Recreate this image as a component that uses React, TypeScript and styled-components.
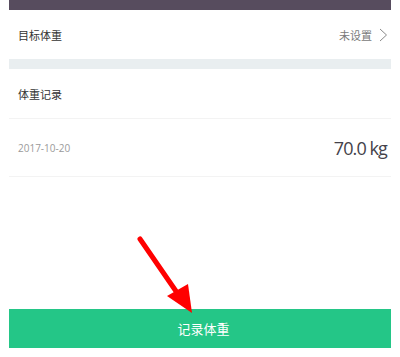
import React from "react";
import styled, { createGlobalStyle } from "styled-components";

const GlobalStyle = createGlobalStyle`
  html, body {
    margin: 0;
    padding: 0;
    background: #ffffff;
    font-family: "Noto Sans", "Noto Sans CJK SC", sans-serif;
  }
`;

const Page = styled.div`
  position: relative;
  width: 400px;
  height: 357px;
  padding: 0 9px;
  box-sizing: border-box;
  display: flex;
  flex-direction: column;
  overflow: hidden;
`;

const TopBar = styled.div`
  height: 10px;
  background: #574c5e;
`;

const Row = styled.div<{ $height: number; $border?: boolean }>`
  height: ${(p) => p.$height}px;
  display: flex;
  align-items: center;
  justify-content: space-between;
  padding: 0 3px 0 9px;
  border-bottom: ${(p) => (p.$border ? "1px solid #f3f3f3" : "none")};
`;

const Label = styled.span`
  font-size: 11px;
  color: #333333;
`;

const Value = styled.span`
  display: flex;
  align-items: center;
  gap: 7px;
  font-size: 11px;
  color: #7a7a7a;
`;

const Gap = styled.div`
  height: 10px;
  background: #e9eef0;
`;

const DateText = styled.span`
  font-family: "Open Sans", "Noto Sans", sans-serif;
  font-size: 10px;
  color: #9a9a9a;
`;

const Weight = styled.span`
  font-family: "Open Sans", "Noto Sans", sans-serif;
  font-size: 18px;
  color: #44424a;
  letter-spacing: -0.9px;
  padding-right: 1px;
`;

const Spacer = styled.div`
  flex: 1;
`;

const RecordButton = styled.button`
  height: 39px;
  margin-bottom: 9px;
  padding: 0 0 0 7px;
  border: none;
  background: #24c687;
  color: #ffffff;
  font-family: "Noto Sans CJK SC", sans-serif;
  font-size: 13px;
  display: flex;
  align-items: center;
  justify-content: center;
`;

const Annotation = styled.svg`
  position: absolute;
  left: 0;
  top: 0;
  pointer-events: none;
`;

function Chevron() {
  return (
    <svg width="9" height="14" viewBox="0 0 9 14">
      <path d="M1 1 L7.5 7 L1 13" fill="none" stroke="#8a8a8a" strokeWidth="1" />
    </svg>
  );
}

export default function App() {
  return (
    <>
      <GlobalStyle />
      <Page>
        <TopBar />
        <Row $height={49}>
          <Label>目标体重</Label>
          <Value>
            未设置
            <Chevron />
          </Value>
        </Row>
        <Gap />
        <Row $height={49} $border>
          <Label>体重记录</Label>
        </Row>
        <Row $height={57} $border>
          <DateText>2017-10-20</DateText>
          <Weight>70.0 kg</Weight>
        </Row>
        <Spacer />
        <RecordButton>记录体重</RecordButton>
        <Annotation width="400" height="357" viewBox="0 0 400 357">
          <line x1="140" y1="239" x2="180" y2="297" stroke="#ff0000" strokeWidth="5" strokeLinecap="round" />
          <polygon points="192,313 167,296 188,284" fill="#ff0000" />
        </Annotation>
      </Page>
    </>
  );
}
